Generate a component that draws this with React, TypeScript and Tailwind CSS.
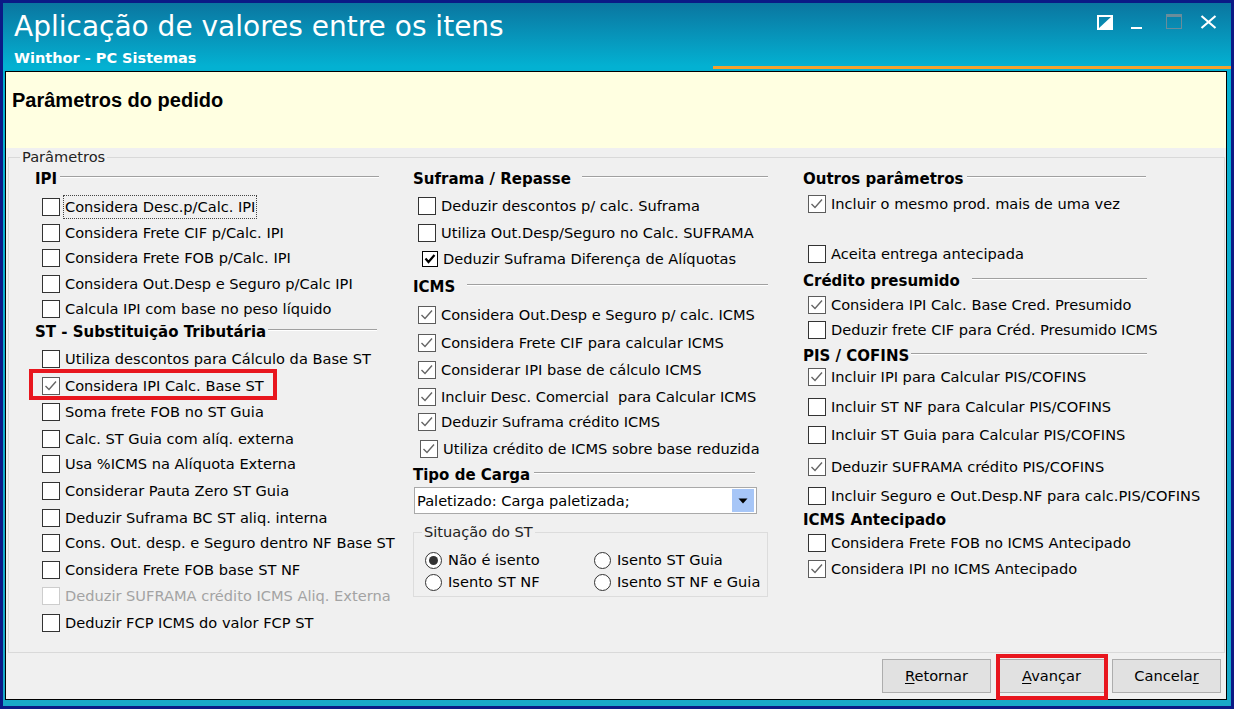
import type { ReactNode } from 'react'

type Row = {
  label: string
  h: string
  header?: boolean
  w?: string
  line?: string
  checked?: boolean
  disabled?: boolean
  strong?: boolean
  focus?: boolean
  marked?: boolean
  indent?: string
}

const LEFT: Row[] = [
  { header: true, label: 'IPI', h: 'h-[28px]', w: 'w-[344px]', line: 'ml-[3px]' },
  { label: 'Considera Desc.p/Calc. IPI', h: 'h-[26px]', focus: true },
  { label: 'Considera Frete CIF p/Calc. IPI', h: 'h-[25px]' },
  { label: 'Considera Frete FOB p/Calc. IPI', h: 'h-[26px]' },
  { label: 'Considera Out.Desp e Seguro p/Calc IPI', h: 'h-[25px]' },
  { label: 'Calcula IPI com base no peso líquido', h: 'h-[23px]' },
  { header: true, label: 'ST - Substituição Tributária', h: 'h-[27px]', w: 'w-[342px]', line: 'ml-[2px]' },
  { label: 'Utiliza descontos para Cálculo da Base ST', h: 'h-[27px]' },
  { label: 'Considera IPI Calc. Base ST', h: 'h-[26px]', checked: true, marked: true },
  { label: 'Soma frete FOB no ST Guia', h: 'h-[27px]' },
  { label: 'Calc. ST Guia com alíq. externa', h: 'h-[25px]' },
  { label: 'Usa %ICMS na Alíquota Externa', h: 'h-[27px]' },
  { label: 'Considerar Pauta Zero ST Guia', h: 'h-[27px]' },
  { label: 'Deduzir Suframa BC ST aliq. interna', h: 'h-[25px]' },
  { label: 'Cons. Out. desp. e Seguro dentro NF Base ST', h: 'h-[27px]' },
  { label: 'Considera Frete FOB base ST NF', h: 'h-[26px]' },
  { label: 'Deduzir SUFRAMA crédito ICMS Aliq. Externa', h: 'h-[27px]', disabled: true },
  { label: 'Deduzir FCP ICMS do valor FCP ST', h: 'h-[20px]' },
]

const MIDDLE: Row[] = [
  { header: true, label: 'Suframa / Repasse', h: 'h-[27px]', w: 'w-[355px]', line: 'ml-[11px]' },
  { label: 'Deduzir descontos p/ calc. Suframa', h: 'h-[27px]' },
  { label: 'Utiliza Out.Desp/Seguro no Calc. SUFRAMA', h: 'h-[26px]' },
  { label: 'Deduzir Suframa Diferença de Alíquotas', h: 'h-[28px]', checked: true, strong: true },
  { header: true, label: 'ICMS', h: 'h-[28px]', w: 'w-[355px]', line: 'ml-[12px]' },
  { label: 'Considera Out.Desp e Seguro p/ calc. ICMS', h: 'h-[28px]', checked: true },
  { label: 'Considera Frete CIF para calcular ICMS', h: 'h-[27px]', checked: true },
  { label: 'Considerar IPI base de cálculo ICMS', h: 'h-[27px]', checked: true },
  { label: 'Incluir Desc. Comercial  para Calcular ICMS', h: 'h-[25px]', checked: true },
  { label: 'Deduzir Suframa crédito ICMS', h: 'h-[27px]', checked: true },
  { label: 'Utiliza crédito de ICMS sobre base reduzida', h: 'h-[26px]', checked: true, indent: 'ml-[7px]' },
  { header: true, label: 'Tipo de Carga', h: 'h-[22px]', w: 'w-[342px]', line: 'ml-[4px]' },
]

const RIGHT: Row[] = [
  { header: true, label: 'Outros parâmetros', h: 'h-[25px]', w: 'w-[343px]', line: 'ml-[4px]' },
  { label: 'Incluir o mesmo prod. mais de uma vez', h: 'h-[50px]', checked: true },
  { label: 'Aceita entrega antecipada', h: 'h-[27px]' },
  { header: true, label: 'Crédito presumido', h: 'h-[24px]', w: 'w-[344px]', line: 'ml-[12px]' },
  { label: 'Considera IPI Calc. Base Cred. Presumido', h: 'h-[25px]', checked: true },
  { label: 'Deduzir frete CIF para Créd. Presumido ICMS', h: 'h-[26px]' },
  { header: true, label: 'PIS / COFINS', h: 'h-[21px]', w: 'w-[344px]', line: 'ml-[2px]' },
  { label: 'Incluir IPI para Calcular PIS/COFINS', h: 'h-[30px]', checked: true },
  { label: 'Incluir ST NF para Calcular PIS/COFINS', h: 'h-[28px]' },
  { label: 'Incluir ST Guia para Calcular PIS/COFINS', h: 'h-[32px]' },
  { label: 'Deduzir SUFRAMA crédito PIS/COFINS', h: 'h-[29px]', checked: true },
  { label: 'Incluir Seguro e Out.Desp.NF para calc.PIS/COFINS', h: 'h-[24px]' },
  { header: true, label: 'ICMS Antecipado', h: 'h-[23px]' },
  { label: 'Considera Frete FOB no ICMS Antecipado', h: 'h-[26px]' },
  { label: 'Considera IPI no ICMS Antecipado', h: 'h-[20px]', checked: true },
]

function CheckBox({ checked, disabled, strong }: { checked?: boolean; disabled?: boolean; strong?: boolean }) {
  if (strong) {
    return (
      <span className="w-[16px] h-[16px] shrink-0 border border-black bg-white flex">
        <svg width="14" height="14" viewBox="0 0 14 14">
          <polyline points="2.5,6.5 5.5,10 11.5,3" fill="none" stroke="#000" strokeWidth="2.2" />
        </svg>
      </span>
    )
  }
  const border = disabled ? 'border-[#cdcdcd]' : checked ? 'border-[#5c5c5c]' : 'border-[#333333]'
  return (
    <span className={`w-[18px] h-[18px] shrink-0 border ${border} bg-white flex`}>
      {checked && (
        <svg width="16" height="16" viewBox="0 0 16 16">
          <polyline points="2.5,8 6,11.5 13,3.5" fill="none" stroke="#656565" strokeWidth="1.4" />
        </svg>
      )}
    </span>
  )
}

function Column({ rows, indent, className, children }: { rows: Row[]; indent: string; className: string; children?: ReactNode }) {
  return (
    <div className={`flex flex-col ${className}`}>
      {rows.map((r) =>
        r.header ? (
          <div key={r.label} className={`flex items-start ${r.h}`}>
            <div className={`flex items-center h-[20px] ${r.w ?? ''}`}>
              <span className="font-bold text-[15px] whitespace-nowrap">{r.label}</span>
              {r.line && (
                <div className={`flex-1 h-[2px] border-t border-t-[#a0a0a0] border-b border-b-white mb-[5px] ${r.line}`} />
              )}
            </div>
          </div>
        ) : (
          <div key={r.label} className={`flex items-start ${r.h}`}>
            <div className={`relative flex items-center h-[20px] gap-[5px] ${r.strong ? 'ml-[9px]' : r.indent ?? indent}`}>
              <CheckBox checked={r.checked} disabled={r.disabled} strong={r.strong} />
              <span
                className={`whitespace-pre ${r.disabled ? 'text-[#a3a3a3]' : 'text-black'} ${
                  r.focus ? 'outline outline-1 outline-dotted outline-[#444] outline-offset-[1px]' : ''
                }`}
              >
                {r.label}
              </span>
              {r.marked && (
                <span className="absolute -left-[13px] -top-[7px] w-[248px] h-[31px] border-4 border-[#e8161e]" />
              )}
            </div>
          </div>
        )
      )}
      {children}
    </div>
  )
}

function Radio({ label, selected }: { label: string; selected?: boolean }) {
  return (
    <div className="flex items-center h-[20px] gap-[6px]">
      <span className="w-[17px] h-[17px] rounded-full border border-[#333] bg-white flex items-center justify-center">
        {selected && <span className="w-[9px] h-[9px] rounded-full bg-[#333]" />}
      </span>
      <span>{label}</span>
    </div>
  )
}

function WinButton({ children }: { children: ReactNode }) {
  return (
    <div className="w-[109px] h-[34px] bg-[#e1e1e1] border border-[#adadad] flex items-center justify-center">
      <span>{children}</span>
    </div>
  )
}

export default function App() {
  return (
    <div className="w-[1234px] h-[709px] border-[3px] border-[#0b1a86] bg-linear-to-b from-[#0a76a0] via-[#03b1d2] via-[9%] to-[#18a8c8] flex flex-col font-['DejaVu_Sans',sans-serif] text-[14.6px] leading-[20px] text-black overflow-hidden">
      {/* title bar */}
      <div className="h-[68px] flex flex-col shrink-0">
        <div className="flex justify-between">
          <div className="pl-[11px] pt-[8px] text-white text-[28px] leading-[32px] whitespace-nowrap">
            Aplicação de valores entre os itens
          </div>
          <div className="flex items-start pt-[12px] pr-[14px]">
            <svg width="16" height="15" viewBox="0 0 16 15">
              <rect x="1" y="1" width="14" height="13" fill="none" stroke="white" strokeWidth="2" />
              <path d="M15 1 L1 14 L15 14 Z" fill="white" />
            </svg>
            <div className="w-[11px] h-[2px] bg-white mt-[12px] ml-[18px]" />
            <svg width="16" height="15" viewBox="0 0 16 15" className="-mt-[1px] ml-[24px]">
              <rect x="0.5" y="0.5" width="15" height="14" fill="none" stroke="#6a8d9b" />
              <rect x="0" y="0" width="16" height="3" fill="#6a8d9b" />
            </svg>
            <svg width="17" height="14" viewBox="0 0 17 14" className="ml-[18px]">
              <path d="M1.5 1 L15.5 13 M15.5 1 L1.5 13" stroke="white" strokeWidth="2.2" />
            </svg>
          </div>
        </div>
        <div className="pl-[11px] mt-[7px] text-white font-bold text-[14.5px] leading-[16px]">Winthor - PC Sistemas</div>
        <div className="self-end w-[518px] h-[3px] bg-[#f2a12e]" />
      </div>

      {/* content */}
      <div className="flex-1 ml-[2px] mr-[4px] mb-[6px] border border-black bg-[#f0f0f0] flex flex-col">
        <div className="h-[76px] shrink-0 bg-[#ffffe1] pl-[6px] pt-[16px]">
          <span className="font-['Liberation_Sans',sans-serif] font-bold text-[20px] leading-[24px] text-black">
            Parâmetros do pedido
          </span>
        </div>

        <fieldset className="flex-1 mt-[1px] ml-[2px] mr-[1px] border border-[#d9d9d9] min-w-0">
          <legend className="ml-[11px] px-[2px] leading-[16px] text-[#222]">Parâmetros</legend>
          <div className="flex pl-[26px] pt-[4px]">
            <Column rows={LEFT} indent="ml-[7px]" className="w-[378px]" />
            <Column rows={MIDDLE} indent="ml-[5px]" className="w-[390px]">
              <div className="ml-[1px] w-[343px] h-[27px] bg-white border border-[#a9a9a9] flex items-center justify-between">
                <span className="pl-[2px] whitespace-nowrap">Paletizado: Carga paletizada;</span>
                <span className="w-[22px] h-[23px] mr-[2px] bg-[#a7c6f7] flex items-center justify-center">
                  <svg width="10" height="6" viewBox="0 0 10 6">
                    <path d="M0.5 0.5 L9.5 0.5 L5 5.5 Z" fill="#000" />
                  </svg>
                </span>
              </div>
              <fieldset className="mt-[10px] w-[355px] border border-[#dcdcdc] min-w-0">
                <legend className="ml-[8px] px-[2px] leading-[16px] text-[#222]">Situação do ST</legend>
                <div className="grid grid-cols-[169px_1fr] gap-y-[2px] pl-[11px] pt-[10px] pb-[4px]">
                  <Radio label="Não é isento" selected />
                  <Radio label="Isento ST Guia" />
                  <Radio label="Isento ST NF" />
                  <Radio label="Isento ST NF e Guia" />
                </div>
              </fieldset>
            </Column>
            <Column rows={RIGHT} indent="ml-[5px]" className="flex-1" />
          </div>
        </fieldset>

        <div className="h-[46px] shrink-0 flex justify-end items-start gap-[6px] pt-[6px] pr-[5px]">
          <WinButton>
            <span className="underline underline-offset-2">R</span>etornar
          </WinButton>
          <div className="relative">
            <WinButton>
              <span className="underline underline-offset-2">A</span>vançar
            </WinButton>
            <span className="absolute -left-[1px] -right-[2px] -top-[5px] -bottom-[7px] border-4 border-[#e8161e]" />
          </div>
          <WinButton>
            Cancela<span className="underline underline-offset-2">r</span>
          </WinButton>
        </div>
      </div>
    </div>
  )
}
